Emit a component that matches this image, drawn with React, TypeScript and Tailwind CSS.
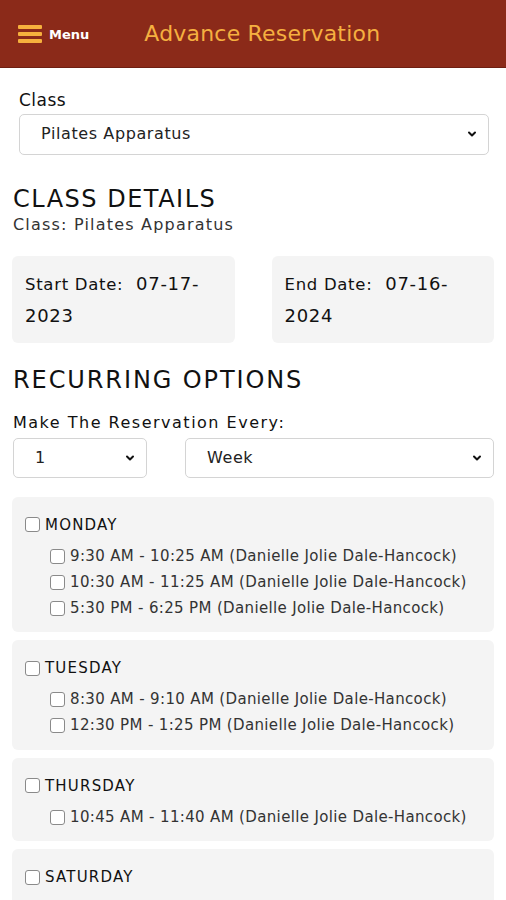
import { ChevronDown } from "lucide-react";

type Slot = string;

type Day = {
  name: string;
  slots: Slot[];
};

const days: Day[] = [
  {
    name: "MONDAY",
    slots: [
      "9:30 AM - 10:25 AM (Danielle Jolie Dale-Hancock)",
      "10:30 AM - 11:25 AM (Danielle Jolie Dale-Hancock)",
      "5:30 PM - 6:25 PM (Danielle Jolie Dale-Hancock)",
    ],
  },
  {
    name: "TUESDAY",
    slots: [
      "8:30 AM - 9:10 AM (Danielle Jolie Dale-Hancock)",
      "12:30 PM - 1:25 PM (Danielle Jolie Dale-Hancock)",
    ],
  },
  {
    name: "THURSDAY",
    slots: ["10:45 AM - 11:40 AM (Danielle Jolie Dale-Hancock)"],
  },
  {
    name: "SATURDAY",
    slots: [
      "10:30 AM - 11:25 AM (Danielle Jolie Dale-Hancock)",
      "12:30 PM - 1:25 PM (Danielle Jolie Dale-Hancock)",
    ],
  },
];

function Select({ value, className }: { value: string; className: string }) {
  return (
    <div className={"relative " + className}>
      <select
        defaultValue={value}
        className="h-full w-full appearance-none rounded-[5px] border border-[#d4d4d4] bg-white pl-[21px] text-[16px] tracking-[0.6px] text-[#222] outline-none"
      >
        <option>{value}</option>
      </select>
      <ChevronDown
        size={12}
        strokeWidth={4}
        className="pointer-events-none absolute right-[11px] top-1/2 -translate-y-1/2 text-[#111]"
      />
    </div>
  );
}

function Box() {
  return (
    <input
      type="checkbox"
      className="h-[15px] w-[15px] shrink-0 appearance-none rounded-[3px] border border-[#8a8a8a] bg-white"
    />
  );
}

function DayCard({ day }: { day: Day }) {
  return (
    <div className="rounded-[6px] bg-[#f4f4f4] pb-[14px] pl-[13px] pr-2 pt-[17px]">
      <label className="flex items-center gap-[5px]">
        <Box />
        <span className="text-[15px] font-medium tracking-[1.2px] text-[#111]">
          {day.name}
        </span>
      </label>
      <div className="mt-[10px] flex flex-col gap-[6px] pl-[25px]">
        {day.slots.map((s) => (
          <label key={s} className="flex h-[20px] items-center gap-[5px]">
            <Box />
            <span className="whitespace-nowrap text-[15px] tracking-[0.35px] text-[#333]">
              {s}
            </span>
          </label>
        ))}
      </div>
    </div>
  );
}

function DateCard({ label, value, year }: { label: string; value: string; year: string }) {
  return (
    <div className="flex-1 rounded-[6px] bg-[#f4f4f4] px-[13px] pb-[12px] pt-[12px] text-[#111]">
      <p className="text-[18px] leading-[31px] tracking-[0.7px]">
        <span className="text-[16.5px]">{label}</span>&nbsp; {value}
        <br />
        {year}
      </p>
    </div>
  );
}

export default function App() {
  return (
    <div className="min-h-[900px] bg-white font-['DejaVu_Sans',sans-serif]">
      <header className="flex h-[68px] items-center border-b border-[#6e1f12] bg-[#8b2a19] pl-[18px]">
        <div className="flex items-center gap-[7px]">
          <div className="flex w-[24px] flex-col gap-[3px]">
            <span className="h-[4px] rounded-[1px] bg-[#f6b13d]" />
            <span className="h-[4px] rounded-[1px] bg-[#f6b13d]" />
            <span className="h-[4px] rounded-[1px] bg-[#f6b13d]" />
          </div>
          <span className="pt-[3px] text-[13px] font-bold text-white">Menu</span>
        </div>
        <h1 className="ml-[55px] text-[22px] font-medium tracking-[0.2px] text-[#f5b040]">
          Advance Reservation
        </h1>
      </header>

      <main className="px-[12px] pt-[20px]">
        <div className="pl-[7px] pr-[5px]">
          <label className="block text-[17px] tracking-[0.5px] text-[#111]">Class</label>
          <Select value="Pilates Apparatus" className="h-[41px]" />
        </div>

        <h2 className="mt-[30px] pl-[1px] text-[24px] font-medium leading-[28px] tracking-[1.5px] text-[#111]">
          CLASS DETAILS
        </h2>
        <p className="pl-[1px] text-[16px] tracking-[1.2px] text-[#333]">
          Class: Pilates Apparatus
        </p>

        <div className="mt-[19px] flex gap-[37px]">
          <DateCard label="Start Date:" value="07-17-" year="2023" />
          <DateCard label="End Date:" value="07-16-" year="2024" />
        </div>

        <h2 className="mt-[21px] pl-[1px] text-[24px] font-medium leading-[32px] tracking-[1.9px] text-[#111]">
          RECURRING OPTIONS
        </h2>
        <p className="mt-[17px] pl-[1px] text-[16px] leading-[20px] tracking-[1.5px] text-[#111]">
          Make The Reservation Every:
        </p>
        <div className="mt-[5px] flex gap-[38px] pl-[1px]">
          <Select value="1" className="h-[40px] w-[134px]" />
          <Select value="Week" className="h-[40px] flex-1" />
        </div>

        <div className="mt-[19px] flex flex-col gap-[8px]">
          {days.map((d) => (
            <DayCard key={d.name} day={d} />
          ))}
        </div>
      </main>
    </div>
  );
}
